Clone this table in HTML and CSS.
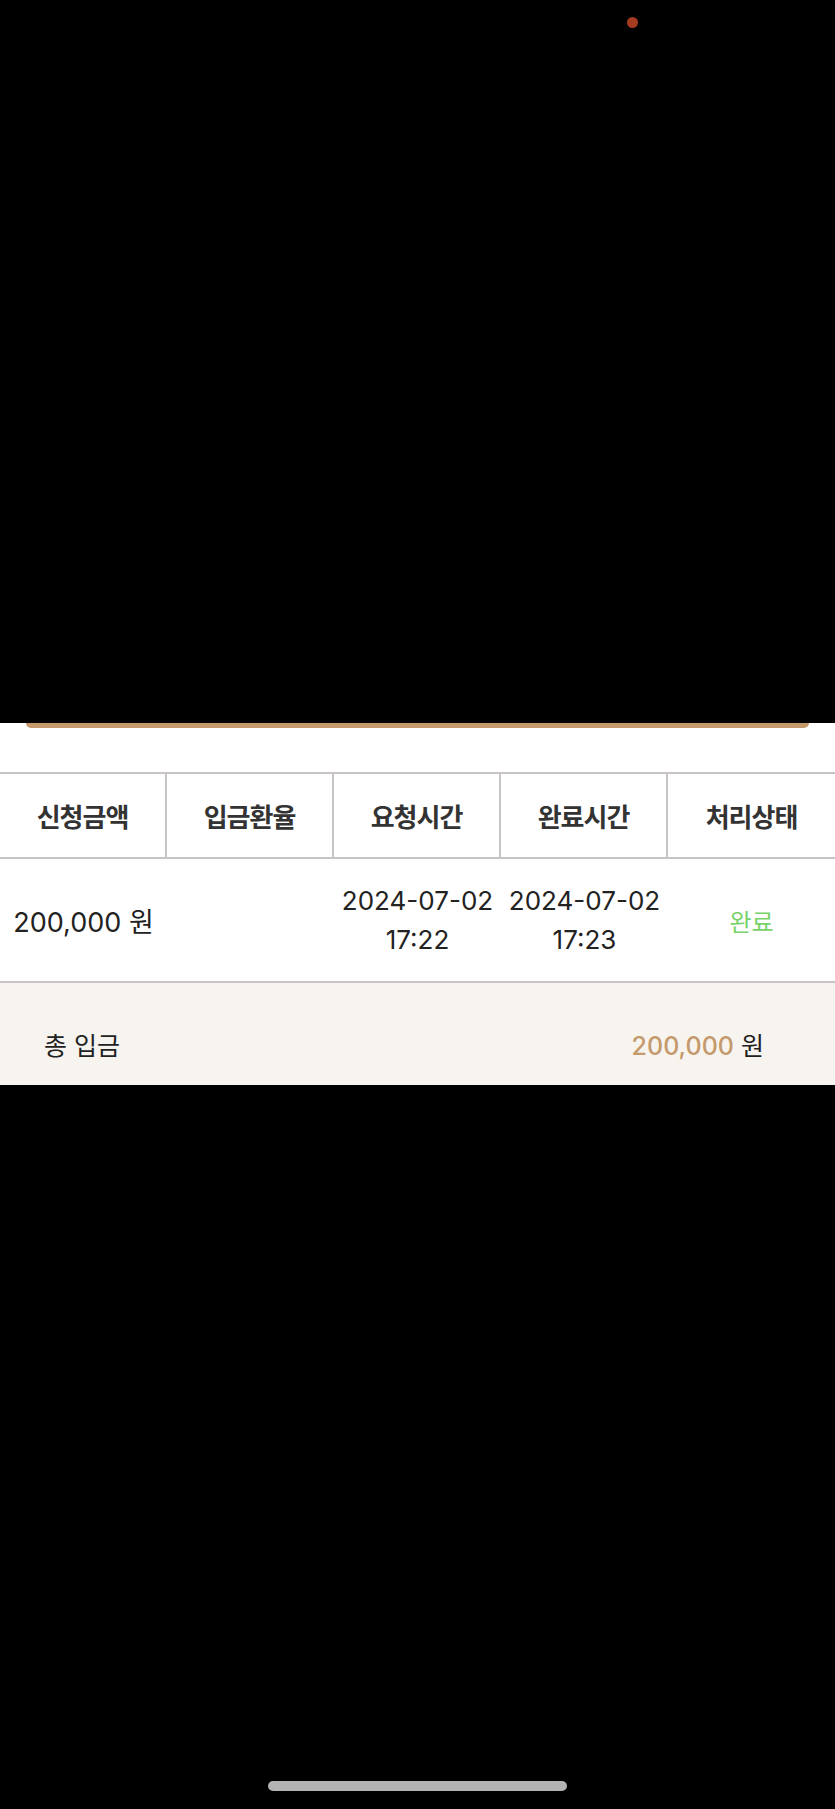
FILE: index.html
```html
<!DOCTYPE html>
<html>
<head>
    <meta charset="utf-8">
    <title>입금내역</title>
    <link rel="stylesheet" href="styles.css">
</head>
<body>
    <div class="screen">
        <div class="top">
            <span class="rec-dot"></span>
        </div>

        <section class="sheet">
            <div class="btn-edge"></div>

            <div class="history">
                <div class="history-head">
                    <div class="cell">신청금액</div>
                    <div class="cell">입금환율</div>
                    <div class="cell">요청시간</div>
                    <div class="cell">완료시간</div>
                    <div class="cell">처리상태</div>
                </div>
                <div class="history-row">
                    <div class="cell amount">200,000 원</div>
                    <div class="cell"></div>
                    <div class="cell time">2024-07-02<br>17:22</div>
                    <div class="cell time">2024-07-02<br>17:23</div>
                    <div class="cell status done">완료</div>
                </div>
            </div>

            <div class="total">
                <span class="total-label">총 입금</span>
                <span class="total-value"><b>200,000</b> 원</span>
            </div>
        </section>

        <div class="bottom">
            <div class="home-bar"></div>
        </div>
    </div>
</body>
</html>
```

FILE: styles.css
```css
body {
    margin: 0;
    padding: 0;
    background: #000;
    font-family: Inter, 'Noto Sans CJK KR', sans-serif;
    color: #222;
}

.screen {
    width: 835px;
    height: 1809px;
    display: flex;
    flex-direction: column;
    background: #000;
}

.top {
    height: 723px;
    position: relative;
}

.rec-dot {
    position: absolute;
    left: 627px;
    top: 17px;
    width: 11px;
    height: 11px;
    border-radius: 50%;
    background: #a53b20;
}

.sheet {
    background: #fff;
}

.btn-edge {
    height: 5px;
    margin: 0 26px;
    background: #c49a6c;
    border-radius: 0 0 6px 6px;
}

.history {
    margin-top: 44px;
}

.history-head,
.history-row {
    display: grid;
    grid-template-columns: repeat(5, 1fr);
}

.history-head {
    height: 83px;
    border-top: 2px solid #c8c3c6;
    border-bottom: 2px solid #c8c3c6;
}

.history-head .cell {
    display: flex;
    align-items: center;
    justify-content: center;
    border-right: 2px solid #c8c3c6;
    font-size: 26px;
    font-weight: 700;
    letter-spacing: -1px;
    color: #333;
}

.history-head .cell:last-child {
    border-right: none;
}

.history-row {
    height: 122px;
    border-bottom: 2px solid #c8c3c6;
}

.history-row .cell {
    display: flex;
    align-items: center;
    justify-content: center;
    text-align: center;
}

.amount {
    font-size: 27px;
}

.time {
    font-size: 26px;
    line-height: 39px;
}

.status {
    font-size: 24px;
}

.done {
    color: #78d26a;
}

.total {
    height: 102px;
    box-sizing: border-box;
    padding: 20px 71px 0 44px;
    background: #f7f3ef;
    display: flex;
    align-items: center;
    justify-content: space-between;
    font-size: 25px;
}

.total-value b {
    font-weight: 500;
    color: #c49a6c;
}

.bottom {
    flex: 1;
    display: flex;
    align-items: flex-end;
    justify-content: center;
    padding-bottom: 18px;
}

.home-bar {
    width: 299px;
    height: 10px;
    border-radius: 5px;
    background: #b3b3b3;
}
```
